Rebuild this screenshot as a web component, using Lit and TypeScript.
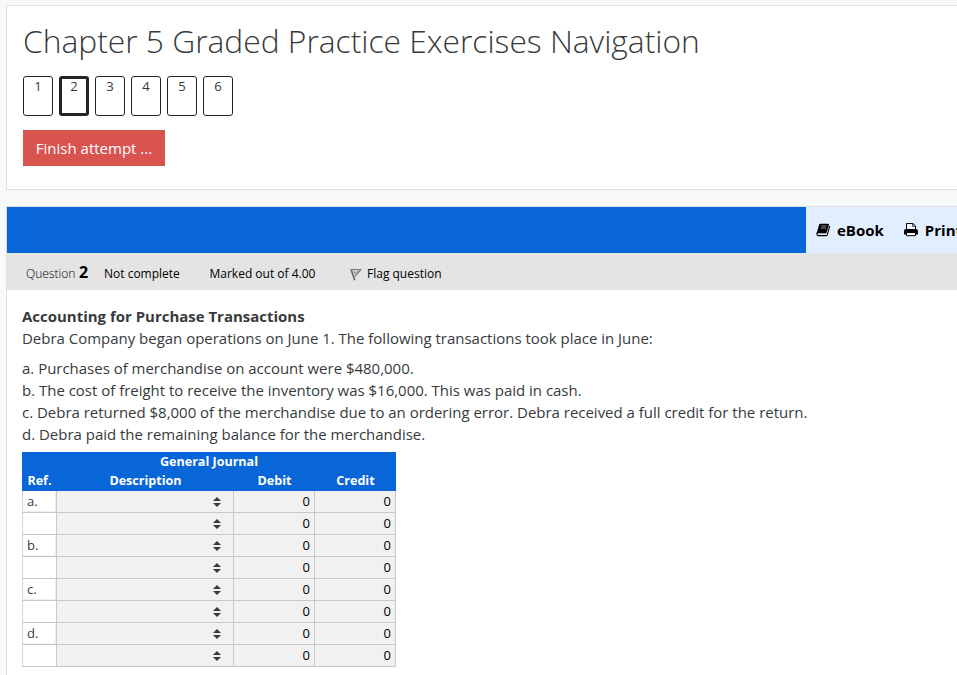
import { LitElement, html, css } from "lit";
import { customElement } from "lit/decorators.js";
import { classMap } from "lit/directives/class-map.js";

@customElement("quiz-nav")
class QuizNav extends LitElement {
  static styles = css`
    :host { display: block; box-sizing: border-box; height: 185px; padding: 16px; background: #fff; border: 1px solid #dedfe0; border-right: 0; }
    h2 { margin: 0 0 16px; height: 38px; line-height: 37px; font-size: 31.75px; font-weight: 300; color: #373a3c; }
    .pages { display: flex; gap: 6px; }
    .page { box-sizing: border-box; width: 30px; height: 40px; border: 1px solid #212529; border-radius: 3px; text-align: center; font-size: 13.1px; line-height: 18px; color: #373a3c; }
    .page.current { border-width: 3px; line-height: 14px; }
    button { display: block; margin-top: 14px; width: 142px; height: 36px; padding: 0; border: 0; background: #d9534f; color: #fff; font: 15px "Open Sans", sans-serif; }
  `;
  render() {
    return html`
      <h2>Chapter 5 Graded Practice Exercises Navigation</h2>
      <div class="pages">
        ${[1, 2, 3, 4, 5, 6].map((n) => html`<div class=${classMap({ page: true, current: n === 2 })}>${n}</div>`)}
      </div>
      <button>Finish attempt ...</button>
    `;
  }
}

@customElement("journal-table")
class JournalTable extends LitElement {
  static styles = css`
    :host { display: block; width: 374px; font-size: 13px; color: #373a3c; }
    .head { background: #0966d9; color: #fff; font-weight: 700; height: 39px; text-align: center; font-size: 12.55px; }
    .title { height: 19px; line-height: 19px; }
    .row { display: grid; grid-template-columns: 35px 177px 81px 81px; }
    .labels .c { border: 0; height: 20px; background: none; text-align: center; padding: 0; line-height: 19px; }
    .c { box-sizing: border-box; height: 22px; border-right: 1px solid #c8c8c8; border-bottom: 1px solid #c8c8c8; background: #f1f1f1; line-height: 21px; }
    .ref { background: #fff; border-left: 1px solid #d4d4d4; padding-left: 4px; }
    .named { box-shadow: inset -1px -1px #eee; }
    .select { display: flex; align-items: center; justify-content: flex-end; padding-right: 12px; }
    .num { text-align: right; padding-right: 4px; color: #000; }
    svg { display: block; }
  `;
  render() {
    return html`
      <div class="head">
        <div class="title">General Journal</div>
        <div class="row labels">
          <div class="c">Ref.</div><div class="c">Description</div><div class="c">Debit</div><div class="c">Credit</div>
        </div>
      </div>
      ${["a.", "", "b.", "", "c.", "", "d.", ""].map((ref) => html`
        <div class="row">
          <div class=${classMap({ c: true, ref: true, named: !!ref })}>${ref}</div>
          <div class="c select">
            <svg width="8" height="10" viewBox="0 0 8 10" fill="#373a3c"><path d="M0 4 4 0l4 4zM0 6h8L4 10z"/></svg>
          </div>
          <div class="c num">0</div>
          <div class="c num">0</div>
        </div>`)}
    `;
  }
}

@customElement("app-root")
class AppRoot extends LitElement {
  static styles = css`
    :host { display: block; box-sizing: border-box; height: 675px; overflow: hidden; padding: 5px 0 0 6px; background: #f8f9fb; font-family: "Open Sans", sans-serif; font-size: 15px; color: #373a3c; white-space: nowrap; }
    .question { box-sizing: border-box; margin-top: 16px; height: 480px; background: #fff; border: 1px solid #dedfe0; border-right: 0; }
    .toolbar { display: flex; height: 46px; background: #0966d9; }
    .tools { display: flex; align-items: center; margin-left: 799px; width: 152px; flex: none; overflow: hidden; background: #e1eeff; color: #000; font-size: 15px; font-weight: 700; }
    .tools svg { flex: none; display: block; }
    .book { margin: 0 6px 0 10px; }
    .printer { margin: 0 7px 0 20px; }
    .info { display: flex; height: 37px; box-sizing: border-box; padding-left: 19px; background: #e4e4e4; color: #000; font-size: 12px; line-height: 41px; }
    .label { font-weight: 300; width: 53px; }
    .no { font-size: 16px; font-weight: 700; width: 25px; line-height: 38px; }
    .state { width: 105.5px; }
    .marks { width: 140px; }
    .flag { margin: 15px 5.5px 0 0; }
    .body { padding: 15px 0 0 15px; font-size: 14.98px; line-height: 22px; }
    p { margin: 0 0 8px; }
    .items { margin-bottom: 7px; }
  `;
  render() {
    return html`
      <quiz-nav></quiz-nav>
      <section class="question">
        <div class="toolbar">
          <div class="tools">
            <svg class="book" width="15" height="14" viewBox="0 0 15 14">
              <path d="M4.2 .7h7.9q1.1 0 .8 1l-2.3 7.7q-.3 1-1.3 1H1.6q-1 0-.7-1L3.1 1.7q.3-1 1.1-1Z"/>
              <path d="M1.1 9.4q-.8 3.2 1.2 3.2h7.8q.9 0 1.2-.9L13.7 3" fill="none" stroke="#000" stroke-width="1.1"/>
              <path d="M1.8 11.1h8" stroke="#e1eeff" stroke-width=".9"/>
              <path d="M5.4 3h5.2M4.8 5h5.2" stroke="#9aa3af" stroke-width=".9"/>
            </svg>
            <span>eBook</span>
            <svg class="printer" width="14" height="14" viewBox="0 0 14 14">
              <path d="M2.5 7V.5h6.4l2.6 2.4V7" fill="#f4f9ff" stroke="#000"/>
              <path d="M8.6 1v2.3H11" fill="none" stroke="#000" stroke-width=".8"/>
              <path d="M2 6h10q2 0 2 2v3.4h-2.6V9.6H2.6v1.8H0V8q0-2 2-2Z"/>
              <path d="M2.5 9.5h9v3.2h-9z" fill="#f4f9ff" stroke="#000"/>
            </svg>
            <span>Print</span>
          </div>
        </div>
        <div class="info">
          <span class="label">Question</span><span class="no">2</span>
          <span class="state">Not complete</span><span class="marks">Marked out of 4.00</span>
          <svg class="flag" width="12" height="13" viewBox="0 0 12 13" fill="none" stroke="#6b6b6b">
            <path d="M1 1.3 4.8 12.3" stroke-width="1.8"/><path d="M2 1.5 10.7 1.7 5 8.3" stroke-width="1.1"/><path d="M4.2 3 5 5.6 7.6 3" stroke-width=".9"/>
          </svg>
          <span>Flag question</span>
        </div>
        <div class="body">
          <p><b>Accounting for Purchase Transactions</b><br />Debra Company began operations on June 1. The following transactions took place in June:</p>
          <p class="items">a. Purchases of merchandise on account were $480,000.<br />b. The cost of freight to receive the inventory was $16,000. This was paid in cash.<br />c. Debra returned $8,000 of the merchandise due to an ordering error. Debra received a full credit for the return.<br />d. Debra paid the remaining balance for the merchandise.</p>
          <journal-table></journal-table>
        </div>
      </section>
    `;
  }
}
